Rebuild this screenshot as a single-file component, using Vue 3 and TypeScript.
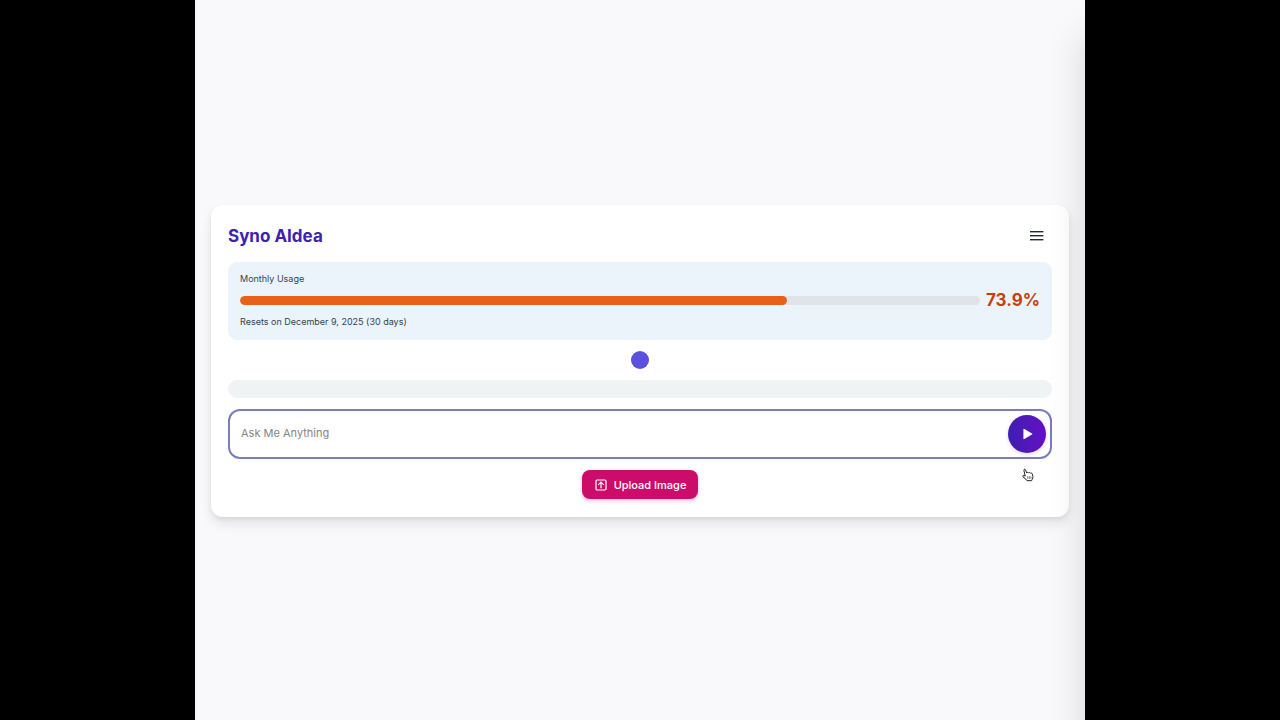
<script setup lang="ts">
import { ref } from 'vue'

const usage = ref(73.9)
const resetDate = ref('December 9, 2025')
const daysLeft = ref(30)
const prompt = ref('')
</script>

<template>
  <div class="backdrop">
    <div class="stage">
      <main class="card">
        <header class="header">
          <h1 class="title">Syno AIdea</h1>
          <button class="menu" type="button" aria-label="Menu">
            <svg width="14" height="10" viewBox="0 0 14 10" fill="#1f2937">
              <rect y="0" width="13.4" height="1.4" />
              <rect y="4" width="13.4" height="1.4" />
              <rect y="8" width="13.4" height="1.4" />
            </svg>
          </button>
        </header>

        <section class="usage">
          <p class="note">Monthly Usage</p>
          <div class="meter">
            <div class="track">
              <div class="fill" :style="{ width: usage + '%' }"></div>
            </div>
            <strong class="percent">{{ usage }}%</strong>
          </div>
          <p class="note">Resets on {{ resetDate }} ({{ daysLeft }} days)</p>
        </section>

        <div class="dot"></div>
        <div class="output"></div>

        <form class="ask" @submit.prevent>
          <input v-model="prompt" class="field" type="text" placeholder="Ask Me Anything" aria-label="Ask Me Anything" />
          <button class="send" type="submit" aria-label="Send">
            <svg width="10" height="12" viewBox="0 0 10 12">
              <path d="M.8 1.1 9.2 6 .8 10.9Z" fill="#fff" stroke="#fff" stroke-width=".7" stroke-linejoin="round" />
            </svg>
          </button>
          <svg class="pointer" width="12" height="14" viewBox="0 0 12 14" aria-hidden="true">
            <path
              d="M3.2 8.1 1.9 2.3C1.7 1.2 3.1.8 3.5 1.8L4.7 5C5.1 4.2 6.3 4.2 6.6 4.9 7.1 4.3 8.2 4.5 8.5 5.2 9.2 4.8 10.1 5.1 10.3 6L10.9 8.6C11.1 9.7 10.7 10.5 10.2 11.4L9.6 12.7H5L3.8 11.1 1 8.8C.2 8 1.1 7 2 7.4Z"
              fill="#fff" stroke="#222" stroke-width="1" stroke-linejoin="round" />
            <path d="M5.7 8.3v2.6M7.3 8.3v2.6M8.9 8.3v2.6" stroke="#444" stroke-width=".7" />
          </svg>
        </form>

        <button class="upload" type="button">
          <svg width="12" height="12" viewBox="0 0 12 12" fill="none" stroke="#fff" stroke-width="1.2">
            <rect x="1" y="1" width="10" height="10" rx="1.2" />
            <path d="M6 9.3V3.3M3.2 5.8 6 3l2.8 2.8" />
          </svg>
          <span>Upload Image</span>
        </button>
      </main>
      <aside class="drawer" aria-hidden="true"></aside>
    </div>
  </div>
</template>

<style>
body {
  background: #000;
}
</style>

<style scoped>
.backdrop {
  min-height: 100vh;
  display: flex;
  justify-content: center;
  background: #000;
  font-family: Inter, "Liberation Sans", sans-serif;
}
.stage {
  position: relative;
  box-sizing: border-box;
  width: 100%;
  max-width: 890px;
  padding: 18px 16px 16px;
  display: flex;
  align-items: center;
  overflow: hidden;
  background: #f9f9fb;
}
.card {
  box-sizing: border-box;
  flex: 1;
  min-width: 0;
  padding: 17px 17px 18px;
  display: flex;
  flex-direction: column;
  gap: 11px;
  background: #fff;
  border-radius: 12px;
  box-shadow: 0 7px 12px rgba(0, 0, 0, 0.09), 0 2px 4px rgba(0, 0, 0, 0.06);
}
.header {
  height: 28px;
  padding-bottom: 1px;
  display: flex;
  align-items: center;
  justify-content: space-between;
}
.title {
  margin: 0;
  font-size: 17px;
  line-height: 24px;
  font-weight: 700;
  color: #3b22b0;
}
button {
  border: 0;
  padding: 0;
  font: inherit;
  cursor: pointer;
}
.menu {
  width: 30px;
  height: 28px;
  display: grid;
  place-items: center;
  background: transparent;
}
.usage {
  box-sizing: border-box;
  padding: 11px 12px 12px;
  background: #ebf4fb;
  border-radius: 9px;
}
.note {
  margin: 0;
  font-size: 9px;
  line-height: 12px;
  color: #374151;
}
.meter {
  height: 30px;
  padding-bottom: 1px;
  display: flex;
  align-items: center;
  gap: 6px;
}
.track {
  flex: 1;
  height: 9px;
  overflow: hidden;
  background: #e0e4e8;
  border-radius: 5px;
}
.fill {
  height: 100%;
  background: #e8611a;
  border-radius: 5px;
}
.percent {
  font-size: 17px;
  line-height: 24px;
  font-weight: 700;
  color: #c5400f;
}
.dot {
  align-self: center;
  width: 18px;
  height: 18px;
  border-radius: 50%;
  background: #5b50e0;
}
.output {
  height: 18px;
  border-radius: 9px;
  background: #f0f3f4;
}
.ask {
  position: relative;
  box-sizing: border-box;
  height: 50px;
  padding: 0 4px 0 11px;
  display: flex;
  align-items: center;
  border: 2px solid #7b7cc0;
  border-radius: 12px;
  background: #fff;
}
.field {
  flex: 1;
  min-width: 0;
  height: 44px;
  padding: 0 0 2px;
  border: 0;
  outline: 0;
  background: transparent;
  font: 400 11px/18px Inter, "Liberation Sans", sans-serif;
  color: #1f2937;
}
.field::placeholder {
  color: #858585;
  opacity: 1;
}
.send {
  width: 38px;
  height: 38px;
  padding-left: 2px;
  display: grid;
  place-items: center;
  border-radius: 50%;
  background: linear-gradient(90deg, #3d1fb0, #6510c4);
  box-shadow: 0 2px 4px rgba(80, 30, 180, 0.15);
}
.pointer {
  position: absolute;
  right: 16px;
  bottom: -25px;
}
.upload {
  align-self: center;
  height: 29px;
  padding: 0 12px 0 13px;
  display: flex;
  align-items: center;
  gap: 7px;
  border-radius: 8px;
  background: #cb0c6b;
  box-shadow: 0 2px 4px rgba(203, 12, 107, 0.25);
  color: #fff;
  font-size: 11px;
  line-height: 18px;
  font-weight: 500;
}
.drawer {
  position: absolute;
  top: 0;
  bottom: 0;
  left: 100%;
  width: 280px;
  box-shadow: 0 36px 36px rgba(0, 0, 0, 0.15);
}
</style>
